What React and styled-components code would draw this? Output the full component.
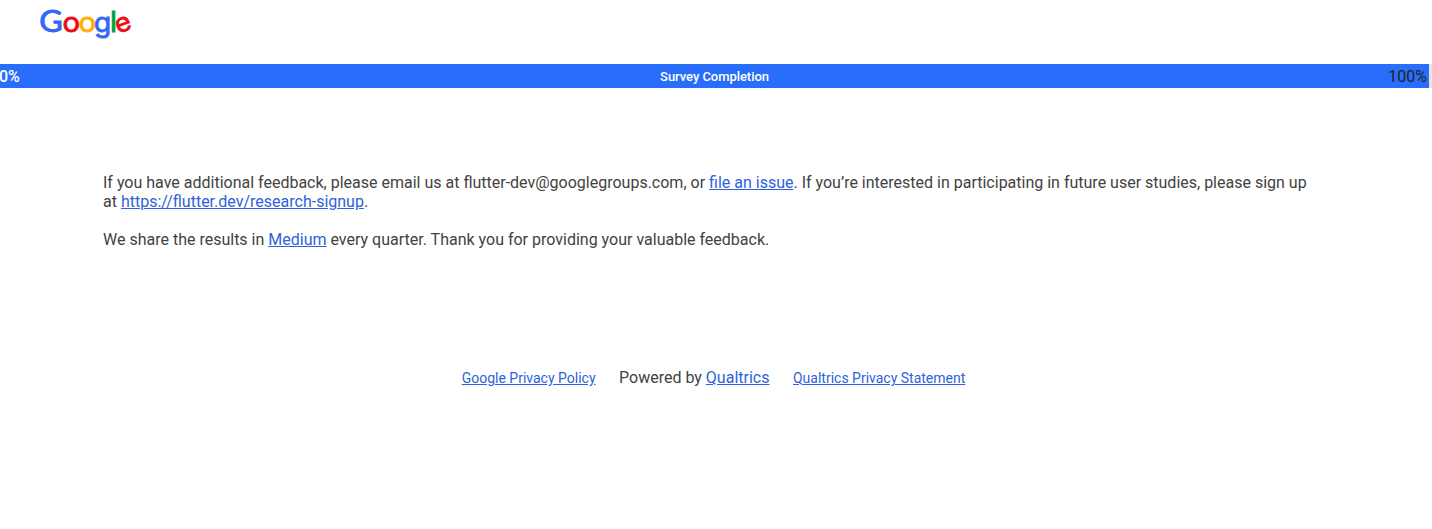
import React from "react";
import styled, { createGlobalStyle } from "styled-components";

const GlobalStyle = createGlobalStyle`
  body {
    margin: 0;
    background: #fff;
    color: #424242;
    font: 16px/19px Roboto, "Liberation Sans", sans-serif;
    overflow: hidden;
  }
`;

const Header = styled.header`
  height: 64px;
  padding: 0 40px;
  box-sizing: border-box;
`;

const Logo = styled.svg`
  display: block;
  width: 92px;
  height: 44px;
  overflow: visible;
  text-anchor: middle;
`;

const Letter = styled.text`
  font-family: ${(p) => p.$font || "Inter"}, Lato, sans-serif;
  font-size: ${(p) => p.$size}px;
  fill: ${(p) => p.$color};
  stroke: ${(p) => p.$color};
  stroke-width: ${(p) => p.$stroke || 0.5}px;
`;

const letters = [
  { char: "G", x: 11, y: 31.6, size: 30, width: 23.5, color: "#3367f6", font: "Lato", stroke: 0.9 },
  { char: "o", x: 31.2, y: 31.5, size: 26, width: 17.6, color: "#f10a12", stroke: 0.8 },
  { char: "o", x: 47.2, y: 31.5, size: 26, width: 17.6, color: "#ffb000", stroke: 0.8 },
  { char: "g", x: 62.5, y: 31.7, size: 26, width: 17.2, color: "#3367f6", stroke: 0.8 },
  { char: "l", x: 73.5, y: 31.7, size: 29, color: "#009f3c", stroke: 0.8 },
  { char: "e", x: 83.2, y: 31.5, size: 26, width: 16, color: "#f10a12", stroke: 0.7, rotate: -20 },
];

const Progress = styled.div`
  height: 24px;
  background: #e6e6e6;
`;

const ProgressFill = styled.div`
  display: grid;
  grid-template-columns: 1fr auto 1fr;
  align-items: center;
  width: 1429px;
  height: 24px;
  background: #296efb;
  color: #fff;
`;

const Percent = styled.span`
  justify-self: ${(p) => (p.$end ? "end" : "start")};
  color: ${(p) => (p.$end ? "#212121" : "#fff")};
  font-weight: ${(p) => (p.$end ? 400 : 500)};
  margin: ${(p) => (p.$end ? "0 2px 0 0" : "0 0 0 -1px")};
`;

const Caption = styled.span`
  font-size: 13px;
  font-weight: 500;
  letter-spacing: -0.05px;
`;

const Message = styled.main`
  width: 1216px;
  margin: 85px 0 0 103px;

  p {
    margin: 0 0 19px;
  }
`;

const Link = styled.a`
  color: #2c63dc;
  text-decoration: underline;
  font-size: ${(p) => (p.$small ? "14px" : "inherit")};
`;

const Footer = styled.footer`
  display: flex;
  justify-content: center;
  align-items: baseline;
  gap: 23.5px;
  margin-top: 119px;
  padding-right: 5px;
`;

export default function App() {
  return (
    <>
      <GlobalStyle />
      <Header>
        <Logo viewBox="0 0 92 44" role="img" aria-label="Google">
          {letters.map(({ char, x, y, size, width, color, font, stroke, rotate }, i) => (
            <Letter
              key={i}
              x={x}
              y={y}
              textLength={width}
              lengthAdjust="spacingAndGlyphs"
              $size={size}
              $color={color}
              $font={font}
              $stroke={stroke}
              transform={rotate ? `rotate(${rotate} 83.2 24.5)` : undefined}
            >
              {char}
            </Letter>
          ))}
        </Logo>
      </Header>
      <Progress>
        <ProgressFill>
          <Percent>0%</Percent>
          <Caption>Survey Completion</Caption>
          <Percent $end>100%</Percent>
        </ProgressFill>
      </Progress>
      <Message>
        <p>
          If you have additional feedback, please email us at
          flutter-dev@googlegroups.com, or <Link href="#">file an issue</Link>.
          If you’re interested in participating in future user studies, please
          sign up at <Link href="#">https://flutter.dev/research-signup</Link>.
        </p>
        <p>
          We share the results in <Link href="#">Medium</Link> every quarter.
          Thank you for providing your valuable feedback.
        </p>
      </Message>
      <Footer>
        <Link $small href="#">Google Privacy Policy</Link>
        <span>
          Powered by <Link href="#">Qualtrics</Link>
        </span>
        <Link $small href="#">Qualtrics Privacy Statement</Link>
      </Footer>
    </>
  );
}
